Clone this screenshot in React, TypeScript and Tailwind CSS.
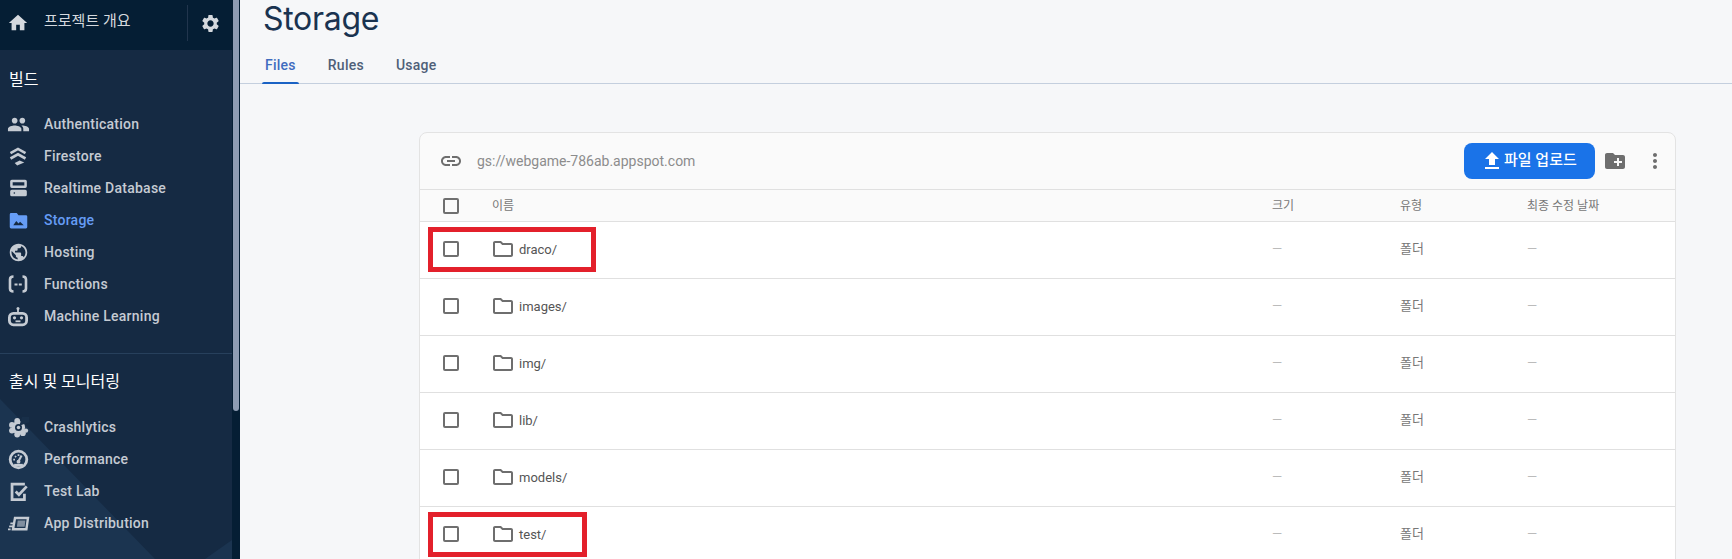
import React from "react";
import {
  MdHome,
  MdSettings,
  MdPeople,
  MdPublic,
  MdLink,
  MdFileUpload,
  MdCreateNewFolder,
  MdMoreVert,
  MdOutlineFolder,
} from "react-icons/md";

const FirestoreIcon = () => (
  <svg width="20" height="20" viewBox="0 0 24 24" fill="none" stroke="currentColor" strokeWidth="3.200">
    <path d="M3 8.500 12 3.500l9 5" />
    <path d="M3 15 12 10l9 5" />
    <path d="M8 20.500l6-3.200 5.500 2.400-8.500 3.800z" fill="currentColor" stroke="none" />
  </svg>
);

const DatabaseIcon = () => (
  <svg width="21" height="20" viewBox="0 0 24 24" fill="currentColor">
    <path
      fillRule="evenodd"
      d="M4 2h16a2 2 0 0 1 2 2v6a2 2 0 0 1-2 2H4a2 2 0 0 1-2-2V4a2 2 0 0 1 2-2zM5 5v4h14V5z"
    />
    <path
      fillRule="evenodd"
      d="M4 14h16a2 2 0 0 1 2 2v4a2 2 0 0 1-2 2H4a2 2 0 0 1-2-2v-4a2 2 0 0 1 2-2zM7 17a1 1 0 1 0 0 2 1 1 0 0 0 0-2z"
    />
  </svg>
);

const StorageIcon = () => (
  <svg width="21" height="21" viewBox="0 0 24 24" fill="currentColor">
    <path d="M2 5a1.500 1.500 0 0 1 1.500-1.500H10l2 2.500h8.500A1.500 1.500 0 0 1 22 7.500v12a1.500 1.500 0 0 1-1.500 1.500h-17A1.500 1.500 0 0 1 2 19.500z" />
    <path d="M6 17.500l3.500-5 2.500 3 1.800-2 4.200 4z" fill="#152a43" />
  </svg>
);

const FunctionsIcon = () => (
  <svg width="24" height="24" viewBox="0 0 24 24" fill="none" stroke="currentColor" strokeWidth="2.600">
    <path d="M7.500 4.500C5 4.500 4 5.500 4 7.500v9c0 2 1 3 3.500 3" />
    <path d="M16.500 4.500c2.500 0 3.500 1 3.500 3v9c0 2-1 3-3.500 3" />
    <path d="M8.500 12.500h3M12.800 12.500h3" strokeWidth="1.800" />
  </svg>
);

const RobotIcon = () => (
  <svg width="24" height="24" viewBox="0 0 24 24" fill="none" stroke="currentColor" strokeWidth="2.800">
    <rect x="3.400" y="9.400" width="17.200" height="11.400" rx="4" />
    <path d="M12 5v4" strokeWidth="1.800" />
    <circle cx="12" cy="4.500" r="1.500" fill="currentColor" stroke="none" />
    <circle cx="8.500" cy="13.800" r="1.600" fill="currentColor" stroke="none" />
    <circle cx="15.500" cy="13.800" r="1.600" fill="currentColor" stroke="none" />
    <path d="M9.500 17.300h5" strokeWidth="1.800" />
  </svg>
);

const CrashlyticsIcon = () => (
  <svg width="21" height="21" viewBox="0 0 24 24" fill="currentColor">
    <circle cx="10.500" cy="4.500" r="3.300" />
    <circle cx="4.500" cy="9" r="3.300" />
    <circle cx="4.500" cy="15.500" r="3.300" />
    <circle cx="10.500" cy="20" r="3.300" />
    <circle cx="17" cy="18.500" r="3.300" />
    <circle cx="20.500" cy="15.500" r="2.500" />
    <circle cx="12" cy="12" r="7.500" />
    <path d="M13 10 24 6V0H16z" fill="#182f49" />
    <circle cx="12" cy="12" r="4" fill="#182f49" />
    <circle cx="12" cy="12" r="2" />
  </svg>
);

const PerformanceIcon = () => (
  <svg width="21" height="21" viewBox="0 0 24 24" fill="none" stroke="currentColor">
    <circle cx="12" cy="12" r="9.500" strokeWidth="3.200" />
    <path d="M12 14l3.500-6.500" strokeWidth="2.400" />
    <circle cx="12" cy="14.500" r="2.200" fill="currentColor" stroke="none" />
    <path d="M6 12h2M8 8l1.300 1.300M12 6v2" strokeWidth="2" />
    <path d="M7 18.500h10" strokeWidth="3" />
  </svg>
);

const TestLabIcon = () => (
  <svg width="22" height="22" viewBox="0 0 24 24" fill="none" stroke="currentColor" strokeWidth="3">
    <path d="M19.500 4.500H5.500v17h13.500v-6.500" />
    <path d="M9.500 12.500l3.500 3.500 8.500-9" />
  </svg>
);

const AppDistributionIcon = () => (
  <svg width="24" height="24" viewBox="0 0 24 24" fill="currentColor">
    <path d="M9 7h13l-1.600 11.300H7z" fill="none" stroke="currentColor" strokeWidth="2.400" />
    <path d="M11.700 9.500h7.700l-.8 6.300h-7.700z" opacity="0.6" />
    <path d="M4.500 11.500h3.500v1.800H4.200zM3.300 14.500h3.700v1.800H3zM2 17.500h2.600v1.800H2z" />
  </svg>
);

const NavItem = ({ icon, label, active }: { icon: React.ReactNode; label: string; active?: boolean }) => (
  <div
    className={`flex h-8 items-center text-sm font-medium tracking-[0.25px] ${
      active ? "text-[#669df6]" : "text-[#c5cbd3]"
    }`}
  >
    <span className="flex w-9 shrink-0 justify-center">{icon}</span>
    <span className="ml-2">{label}</span>
  </div>
);

const Checkbox = ({ className = "" }: { className?: string }) => (
  <div className={`h-4 w-4 rounded-[2px] border-2 border-[#6f6f6f] ${className}`} />
);

const Row = ({ name }: { name: string }) => (
  <div className="flex h-[57px] items-center border-t border-[#e0e0e0] bg-white text-[13px]">
    <div className="flex w-[62px] justify-center">
      <Checkbox className="-mt-[2px]" />
    </div>
    <MdOutlineFolder className="-mt-[2px] ml-[9px] text-[#6e6e6e]" size={24} />
    <span className="ml-[4px] w-[753px] text-[#555]">{name}</span>
    <span className="-mt-[2px] w-[128px] text-[#bbb]">—</span>
    <span className="-mt-[2px] w-[127px] text-[#777]">폴더</span>
    <span className="-mt-[2px] text-[#bbb]">—</span>
  </div>
);

const App = () => {
  return (
    <div className="flex h-[559px] w-[1732px] overflow-hidden bg-[#f6f7f9] font-['Roboto','Noto_Sans_CJK_KR',sans-serif]">
      <aside className="relative flex w-[240px] shrink-0 bg-[#051e34]">
        <div className="relative h-full w-[232px] overflow-hidden bg-[#152a43]">
          <svg className="absolute bottom-0 left-0" width="232" height="160" viewBox="0 0 232 160">
            <path d="M0 0 155 160H0z" fill="#1b3450" />
            <path d="M205 160 232 141V160z" fill="#1b3450" />
          </svg>
          <div className="relative">
            <div className="flex h-[50px] items-center bg-[#051e34] pb-[4px] text-[#d5d9de]">
              <span className="flex w-9 justify-center">
                <MdHome size={22} />
              </span>
              <span className="-mt-[3px] ml-2 text-[15px]">프로젝트 개요</span>
              <div className="ml-auto flex h-9 w-[45px] items-center justify-center border-l border-[#21354d]">
                <MdSettings size={21} />
              </div>
            </div>
            <div className="h-[58px] pt-[19px] pl-[9px] text-base leading-[22px] text-white">빌드</div>
            <div>
              <NavItem icon={<MdPeople size={23} />} label="Authentication" />
              <NavItem icon={<FirestoreIcon />} label="Firestore" />
              <NavItem icon={<DatabaseIcon />} label="Realtime Database" />
              <NavItem icon={<StorageIcon />} label="Storage" active />
              <NavItem icon={<MdPublic size={21} />} label="Hosting" />
              <NavItem icon={<FunctionsIcon />} label="Functions" />
              <NavItem icon={<RobotIcon />} label="Machine Learning" />
            </div>
            <div className="mt-[21px] border-t border-[#27405c] pt-[17px] pl-[9px] text-base leading-[22px] text-white">
              출시 및 모니터링
            </div>
            <div className="pt-[18px]">
              <NavItem icon={<CrashlyticsIcon />} label="Crashlytics" />
              <NavItem icon={<PerformanceIcon />} label="Performance" />
              <NavItem icon={<TestLabIcon />} label="Test Lab" />
              <NavItem icon={<AppDistributionIcon />} label="App Distribution" />
            </div>
          </div>
        </div>
        <div className="ml-[1px] h-[411px] w-[6px] rounded-b-sm bg-[#8e9cb3]" />
      </aside>

      <main className="relative min-w-0 flex-1">
        <div className="pt-[2px]">
          <h1 className="pl-[23px] font-['Inter',sans-serif] text-[32px] leading-[34px] tracking-[-0.3px] text-[#1a3350]">
            Storage
          </h1>
          <div className="mt-[11px] flex h-[37px] gap-[32px] border-b border-[#c4cfde] pl-[25px] text-sm font-medium tracking-[0.25px] text-[#4f5f78]">
            <span className="relative pt-[8px] text-[#3f6cbf]">
              Files
              <span className="absolute -right-[3px] -bottom-[1px] -left-[3px] h-[2px] rounded-t bg-[#1a62c4]" />
            </span>
            <span className="pt-[8px]">Rules</span>
            <span className="pt-[8px]">Usage</span>
          </div>
        </div>

        <div className="mt-[48px] ml-[179px] w-[1257px] overflow-hidden rounded-t-lg border border-[#e3e3e3] bg-[#fafafa]">
          <div className="flex h-[56px] items-center">
            <MdLink className="ml-[19px] text-[#6e6e6e]" size={24} />
            <span className="ml-[14px] text-sm text-[#8c8c8c]">gs://webgame-786ab.appspot.com</span>
            <button className="ml-auto flex h-9 w-[131px] items-center rounded-lg bg-[#1a73e8] pl-4 text-[15px] font-medium text-white">
              <MdFileUpload size={24} />
              <span className="-mt-[2px]">파일 업로드</span>
            </button>
            <MdCreateNewFolder className="ml-[8px] text-[#6e6e6e]" size={24} />
            <MdMoreVert className="mr-[8px] ml-4 text-[#6e6e6e]" size={24} />
          </div>
          <div className="flex h-[32px] items-center border-t border-[#e0e0e0] text-xs text-[#777]">
            <div className="flex w-[62px] justify-center">
              <Checkbox />
            </div>
            <span className="mt-[1px] ml-[10px] w-[780px]">이름</span>
            <span className="mt-[1px] w-[128px]">크기</span>
            <span className="mt-[1px] w-[127px]">유형</span>
            <span className="mt-[1px]">최종 수정 날짜</span>
          </div>
          <Row name="draco/" />
          <Row name="images/" />
          <Row name="img/" />
          <Row name="lib/" />
          <Row name="models/" />
          <Row name="test/" />
        </div>

        {/* red marks drawn on top of the screenshot */}
        <div className="absolute top-[227px] left-[188px] h-[45px] w-[168px] border-[5px] border-[#e3202b]" />
        <div className="absolute top-[512px] left-[188px] h-[45px] w-[159px] border-[5px] border-[#e3202b]" />
      </main>
    </div>
  );
};

export default App;
